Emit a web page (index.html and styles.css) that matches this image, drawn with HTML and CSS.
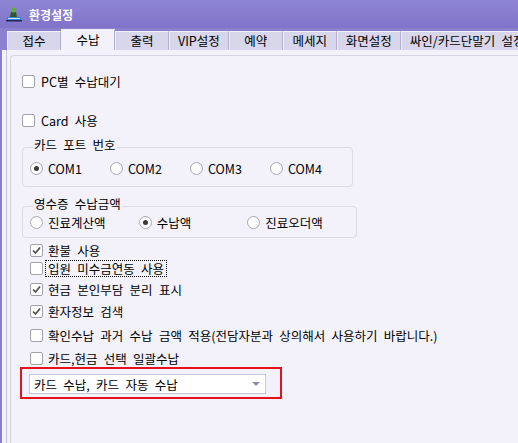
FILE: index.html
```html
<!DOCTYPE html>
<html>
<head>
  <meta charset="UTF-8">
  <title>환경설정</title>
  <link rel="stylesheet" href="styles.css">
</head>
<body>
  <div class="titlebar">
    <svg class="app-icon" width="18" height="17" viewBox="0 0 18 17">
      <rect x="2" y="11" width="14" height="3" fill="#3b7fd0"/>
      <rect x="3" y="12" width="12" height="1" fill="#cfe4ff"/>
      <path d="M5 11 L6 6 L11 6 L12 11 Z" fill="#2d5a2a"/>
      <circle cx="8.5" cy="4" r="2.6" fill="#5fae3c"/>
      <rect x="1" y="14" width="16" height="1.5" fill="#1c2b5a"/>
    </svg>
    <span class="title">환경설정</span>
  </div>

  <div class="tabs">
    <div class="tab">접수</div>
    <div class="tab active">수납</div>
    <div class="tab">출력</div>
    <div class="tab">VIP설정</div>
    <div class="tab">예약</div>
    <div class="tab">메세지</div>
    <div class="tab">화면설정</div>
    <div class="tab">싸인/카드단말기 설정</div>
  </div>

  <div class="client">
    <div class="tabpage">
      <div class="frame">
        <div class="row first"><span class="box"></span>PC별 수납대기</div>
        <div class="row second"><span class="box"></span>Card 사용</div>

        <div class="group port">
          <span class="group-title">카드 포트 번호</span>
          <div class="options">
            <div class="option port-opt"><span class="radio on"></span>COM1</div>
            <div class="option port-opt"><span class="radio"></span>COM2</div>
            <div class="option port-opt"><span class="radio"></span>COM3</div>
            <div class="option port-opt"><span class="radio"></span>COM4</div>
          </div>
        </div>

        <div class="group receipt">
          <span class="group-title">영수증 수납금액</span>
          <div class="options">
            <div class="option amount-opt"><span class="radio"></span>진료계산액</div>
            <div class="option amount-opt"><span class="radio on"></span>수납액</div>
            <div class="option amount-opt"><span class="radio"></span>진료오더액</div>
          </div>
        </div>

        <div class="row sub mt3"><span class="box checked"></span>환불 사용</div>
        <div class="row sub focus-row"><span class="box"></span><span class="focus">입원 미수금연동 사용</span></div>
        <div class="row sub mt3"><span class="box checked"></span>현금 본인부담 분리 표시</div>
        <div class="row sub mt4"><span class="box checked"></span>환자정보 검색</div>
        <div class="row sub mt6"><span class="box"></span>확인수납 과거 수납 금액 적용(전담자분과 상의해서 사용하기 바랍니다.)</div>
        <div class="row sub mt5"><span class="box"></span>카드,현금 선택 일괄수납</div>

        <div class="highlight">
          <div class="combo">
            <span>카드 수납, 카드 자동 수납</span>
            <span class="arrow"></span>
          </div>
        </div>
      </div>
    </div>
  </div>
</body>
</html>
```

FILE: styles.css
```css
body {
  margin: 0;
  background: #8a7fcf;
  font-family: "Noto Sans CJK KR", "Liberation Sans", sans-serif;
  font-size: 12.5px;
  line-height: 15px;
  word-spacing: 3.5px;
  color: #000;
  overflow: hidden;
  height: 443px;
}
.titlebar {
  height: 28px;
  display: flex;
  align-items: center;
  gap: 6px;
  padding-left: 5px;
  background: linear-gradient(#8f85d4, #8073c9);
  color: #fff;
  font-size: 12px;
  font-weight: bold;
}
.app-icon {
  display: block;
}
.tabs {
  height: 22px;
  display: flex;
  align-items: flex-end;
  padding-left: 7px;
  background: #8b81cf;
  overflow: hidden;
}
.tab {
  box-sizing: border-box;
  flex: none;
  height: 19px;
  min-width: 54px;
  padding: 0 8px;
  display: flex;
  align-items: center;
  justify-content: center;
  background: #d8d6ea;
  border: 1px solid;
  border-color: #efeef8 #b4b0d0 transparent #efeef8;
  white-space: nowrap;
}
.tab.active {
  height: 21px;
  background: #f3f2fb;
  border-bottom: none;
  padding-bottom: 2px;
}
.client {
  margin-left: 2px;
  padding-left: 4px;
  background: #f3f2fb;
  height: 393px;
}
.tabpage {
  height: 100%;
  box-sizing: border-box;
  padding: 5px 0 0 3px;
  border-left: 1px solid #c8c5dc;
}
.frame {
  height: 100%;
  box-sizing: border-box;
  padding: 15px 0 0 11px;
  border-left: 1px solid #d6d4e3;
  border-top: 1px solid #d6d4e3;
  border-top-left-radius: 4px;
}
.row {
  display: flex;
  align-items: center;
  gap: 6px;
  height: 20px;
  white-space: nowrap;
}
.row.second {
  margin-top: 19px;
}
.row.sub {
  height: 18px;
  margin-left: 8px;
  gap: 5px;
}
.mt3 { margin-top: 3px; }
.mt4 { margin-top: 4px; }
.mt5 { margin-top: 5px; }
.mt6 { margin-top: 6px; }
.focus-row {
  gap: 3px !important;
}
.focus {
  padding: 0 2px;
  line-height: 15px;
  outline: 1px dotted #000;
}
.box {
  box-sizing: border-box;
  width: 13px;
  height: 13px;
  flex: none;
  background: #fff;
  border: 1px solid #a3a3ab;
  border-radius: 2px;
}
.box.checked {
  background: #fff url("data:image/svg+xml;utf8,<svg xmlns='http://www.w3.org/2000/svg' width='11' height='11' viewBox='0 0 11 11'><path d='M2 5.5 L4.5 8 L9 2.5' fill='none' stroke='%23505050' stroke-width='1.7'/></svg>") center no-repeat;
}
.group {
  position: relative;
  box-sizing: border-box;
  border: 1px solid #dcdae6;
  border-radius: 4px;
}
.group-title {
  position: absolute;
  left: 10px;
  top: -9px;
  padding: 0 1px;
  background: #f3f2fb;
  line-height: 12px;
}
.group.port {
  width: 331px;
  margin-top: 17px;
  padding: 10px 0 8px 7px;
}
.group.receipt {
  width: 335px;
  margin-top: 19px;
  padding: 5px 0 5px 7px;
}
.options {
  display: flex;
}
.option {
  display: flex;
  align-items: center;
  gap: 5px;
  height: 20px;
  line-height: 13px;
}
.port-opt { width: 80px; }
.amount-opt { width: 110px; }
.radio {
  box-sizing: border-box;
  width: 13px;
  height: 13px;
  flex: none;
  border: 1px solid #a8a8b2;
  border-radius: 50%;
  background: #fff;
  display: flex;
  align-items: center;
  justify-content: center;
}
.radio.on::after {
  content: "";
  width: 5px;
  height: 5px;
  border-radius: 50%;
  background: #3a3a3a;
}
.highlight {
  box-sizing: border-box;
  width: 262px;
  height: 32px;
  margin-left: -2px;
  padding: 5px 0 0 7px;
  border: 2px solid #e8101c;
}
.combo {
  box-sizing: border-box;
  width: 237px;
  height: 20px;
  display: flex;
  align-items: center;
  justify-content: space-between;
  padding: 0 5px 0 4px;
  background: #fff;
  border: 1px solid #c9c8d6;
}
.arrow {
  width: 0;
  height: 0;
  border-left: 4px solid transparent;
  border-right: 4px solid transparent;
  border-top: 4px solid #908ca8;
}
```
